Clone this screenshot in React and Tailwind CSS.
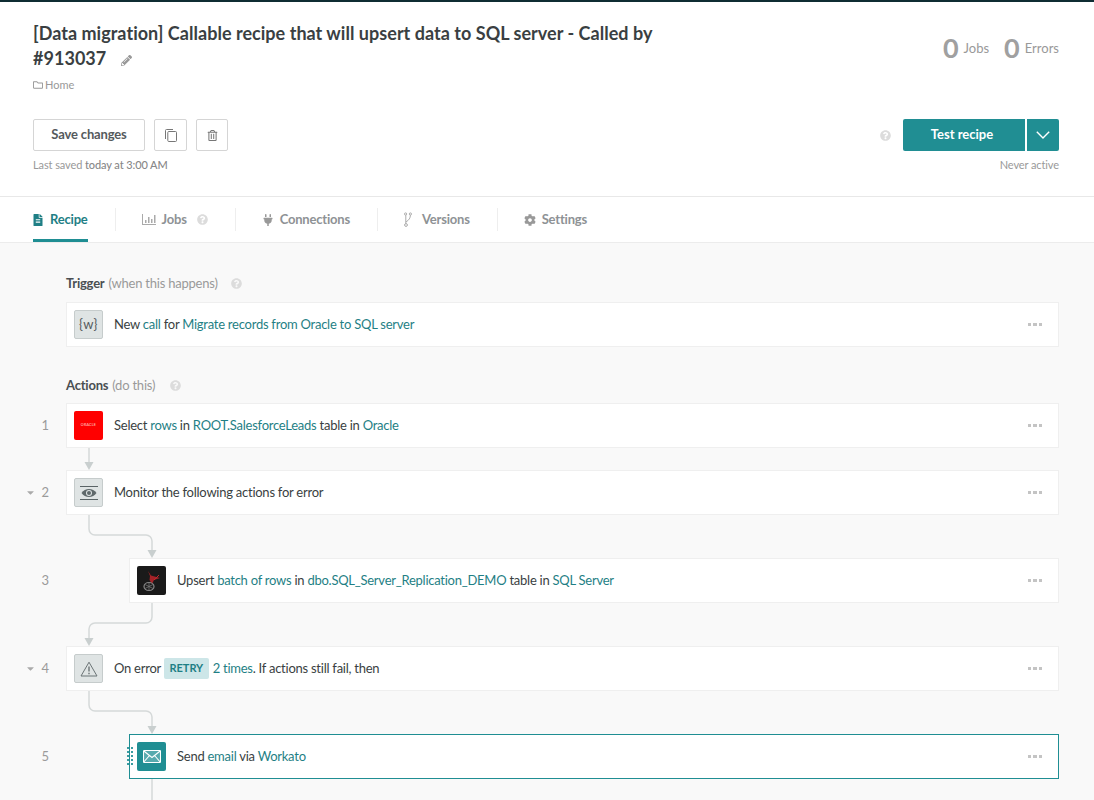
import React from "react";
import { FaFileAlt, FaPlug, FaCog, FaQuestionCircle, FaPencilAlt, FaRegFolder, FaCaretDown, FaRegTrashAlt } from "react-icons/fa";

const Help = ({ className = "" }) => <FaQuestionCircle className={`text-[#dcdcdc] text-[11px] ${className}`} />;

const Link = ({ children }) => <span className="text-[#1f7f85]">{children}</span>;

const Dots = () => (
  <div className="flex gap-[2px] ml-auto mr-[16px]">
    <span className="w-[3.5px] h-[3.5px] bg-[#c4c4c4]" />
    <span className="w-[3.5px] h-[3.5px] bg-[#c4c4c4]" />
    <span className="w-[3.5px] h-[3.5px] bg-[#c4c4c4]" />
  </div>
);

const Tile = ({ children, className = "bg-[#dfe4e4] border border-[#c6cccc]" }) => (
  <div className={`w-[29px] h-[29px] rounded-[2px] shrink-0 flex items-center justify-center mr-[11px] ${className}`}>{children}</div>
);

const Card = ({ icon, children, active }) => (
  <div className={`relative flex-1 h-[45px] bg-white flex items-center pl-[7px] text-[13px] tracking-[-0.25px] text-[#3a3f42] border ${active ? "border-[#1f8e93]" : "border-[#efefef]"}`}>
    {active && (
      <div className="absolute left-[-3px] top-[12px] w-[6px] flex flex-wrap gap-[2px]">
        {Array.from({ length: 10 }).map((_, i) => (
          <span key={i} className="w-[2px] h-[2px] bg-[#3a9ca1]" />
        ))}
      </div>
    )}
    {icon}
    <div className="whitespace-nowrap">{children}</div>
    <Dots />
  </div>
);

const Row = ({ n, caret, indent, icon, active, children }) => (
  <div className="flex items-center">
    <div className="w-[66px] shrink-0 flex items-center justify-end pr-[17px] text-[13px] text-[#9b9b9b] gap-[5px]">
      {caret && <FaCaretDown className="text-[#aaaaaa] text-[11px]" />}
      <span>{n}</span>
    </div>
    <div className={`flex-1 flex ${indent ? "pl-[63px]" : ""}`}>
      <Card icon={icon} active={active}>{children}</Card>
    </div>
  </div>
);

const Arrow = ({ x, y }) => <polygon points={`${x - 4.5},${y - 8} ${x + 4.5},${y - 8} ${x},${y}`} fill="#c9cfcf" />;

const Connector = ({ h, d, ax }) => (
  <svg className="block ml-[66px]" width="120" height={h} fill="none">
    <path d={d} stroke="#d5d9d9" strokeWidth="1.5" />
    <Arrow x={ax} y={h} />
  </svg>
);

const Tab = ({ icon, label, active, extra, last, gap }) => (
  <div className={`flex items-center h-[23px] pl-[26px] pr-[27px] first:pl-0 ${last ? "" : "border-r border-[#eeeeee]"}`}>
    <div className={`relative flex items-center h-[23px] ${gap} ${active ? "text-[#1f7f85]" : "text-[#8e9295]"}`}>
      {icon}
      <span className="font-bold text-[13px] tracking-[-0.2px]">{label}</span>
      {extra}
      {active && <span className="absolute left-0 right-0 top-[31px] h-[3px] bg-[#1f8e93]" />}
    </div>
  </div>
);

export default function App() {
  return (
    <div className="h-[800px] overflow-hidden bg-white" style={{ fontFamily: "Lato, sans-serif" }}>
      <div className="h-[2px] bg-[#0f2d33]" />
      <header className="h-[195px] px-[33px] pr-[35px] pt-[19px] border-b border-[#e8e8e8]">
        <div className="flex justify-between">
          <div className="w-[640px]">
            <h1 className="text-[18px] leading-[25px] tracking-[0.03px] font-bold text-[#3a3f42]">
              [Data migration] Callable recipe that will upsert data to SQL server - Called by
              <br />
              #913037
              <FaPencilAlt className="inline-block ml-[15px] text-[11px] text-[#999999] align-[-1px]" />
            </h1>
            <div className="flex items-center gap-[2px] mt-[6px] text-[11px] text-[#999999] leading-[16px]">
              <FaRegFolder className="text-[10px]" />
              Home
            </div>
          </div>
          <div className="flex items-start gap-[15px] text-[13px] text-[#999999] pt-[11px]">
            <div className="flex items-center gap-[5px]">
              <span className="text-[27px] leading-[32px] font-bold text-[#a0a0a0]">0</span>
              <span className="mt-[1px]">Jobs</span>
            </div>
            <div className="flex items-center gap-[5px]">
              <span className="text-[27px] leading-[32px] font-bold text-[#a0a0a0]">0</span>
              <span className="mt-[1px]">Errors</span>
            </div>
          </div>
        </div>
        <div className="flex justify-between mt-[26px]">
          <div>
            <div className="flex gap-[9px]">
              <button className="w-[112px] h-[32px] border border-[#d5d5d5] rounded-[2px] text-[13px] tracking-[-0.15px] font-bold text-[#555a5d]">Save changes</button>
              <button className="w-[33px] h-[32px] border border-[#d5d5d5] rounded-[2px] flex items-center justify-center">
                <svg width="12" height="13" viewBox="0 0 12 13" fill="none" stroke="#777" strokeWidth="1">
                  <path d="M8 .5H1.5a1 1 0 0 0-1 1V10" />
                  <rect x="2.8" y="2.5" width="8.7" height="10" rx="1" />
                </svg>
              </button>
              <button className="w-[32px] h-[32px] border border-[#d5d5d5] rounded-[2px] flex items-center justify-center">
                <FaRegTrashAlt className="text-[11px] text-[#777777]" />
              </button>
            </div>
            <p className="mt-[7px] text-[11px] leading-[14px] tracking-[-0.1px] text-[#999999]">
              Last saved <span className="text-[#888888] font-medium">today at 3:00 AM</span>
            </p>
          </div>
          <div className="flex flex-col items-end">
            <div className="flex items-center">
              <Help className="mr-[12px]" />
              <button className="w-[122px] h-[32px] bg-[#208e93] rounded-l-[2px] text-white text-[13px] font-bold pr-[4px]">Test recipe</button>
              <button className="w-[32px] h-[32px] ml-[2px] bg-[#208e93] rounded-r-[2px] flex items-center justify-center">
                <svg width="14" height="8" viewBox="0 0 14 8" fill="none" stroke="#fff" strokeWidth="1.4">
                  <path d="M.8.8 7 7l6.2-6.2" />
                </svg>
              </button>
            </div>
            <p className="mt-[7px] text-[11px] leading-[14px] tracking-[-0.1px] text-[#999999]">Never active</p>
          </div>
        </div>
      </header>

      <nav className="h-[46px] px-[33px] flex items-center border-b border-[#ececec]">
        <Tab active gap="gap-[6px]" label="Recipe" icon={<FaFileAlt className="text-[12px] -ml-[1px]" />} />
        <Tab
          gap="gap-[6px]"
          label="Jobs"
          icon={
            <svg width="14" height="11" viewBox="0 0 14 11" fill="#aaa">
              <path d="M0 0h1v10h13v1H0zM3 6h1.5v3H3zM6 3h1.5v6H6zM9 5h1.5v4H9zM12 1h1.5v8H12z" />
            </svg>
          }
          extra={<Help className="ml-[4px]" />}
        />
        <Tab gap="gap-[6px]" label="Connections" icon={<FaPlug className="text-[12px] text-[#999999]" />} />
        <Tab
          gap="gap-[10px]"
          label="Versions"
          icon={
            <svg width="8" height="15" viewBox="0 0 8 15" fill="none" stroke="#aaa" strokeWidth="1">
              <circle cx="2" cy="13" r="1.4" />
              <circle cx="1.6" cy="2" r="1.1" />
              <circle cx="6.4" cy="2" r="1.1" />
              <path d="M1.8 11.5V3.2M2 10C5 8 6.4 6 6.4 3.2" />
            </svg>
          }
        />
        <Tab last gap="gap-[6px]" label="Settings" icon={<FaCog className="text-[12px] text-[#999999]" />} />
      </nav>

      <main className="bg-[#f9f9f9] h-[557px] pr-[35px] pt-[31px] overflow-hidden">
        <div className="ml-[66px] flex items-center text-[13px] leading-[18px] tracking-[-0.22px]">
          <span className="font-bold text-[#4a4f52]">Trigger</span>
          <span className="ml-[4px] text-[#999999]">(when this happens)</span>
          <Help className="ml-[13px]" />
        </div>
        <div className="ml-[66px] mt-[10px] flex">
          <Card
            icon={
              <Tile>
                <span className="text-[13px] tracking-[0.5px] text-[#555a5d]">{"{w}"}</span>
              </Tile>
            }
          >
            New <Link>call</Link> for <Link>Migrate records from Oracle to SQL server</Link>
          </Card>
        </div>

        <div className="ml-[66px] mt-[29px] flex items-center text-[13px] leading-[18px] tracking-[-0.22px]">
          <span className="font-bold text-[#4a4f52]">Actions</span>
          <span className="ml-[4px] text-[#999999]">(do this)</span>
          <Help className="ml-[15px]" />
        </div>
        <div className="mt-[9px]">
          <Row
            n="1"
            icon={
              <Tile className="bg-[#ff0000]">
                <span className="text-[3.5px] tracking-[0.3px] text-white/80">ORACLE</span>
              </Tile>
            }
          >
            Select <Link>rows</Link> in <Link>ROOT.SalesforceLeads</Link> table in <Link>Oracle</Link>
          </Row>
          <Connector h={22} d="M23 0V16" ax={23} />
          <Row
            n="2"
            caret
            icon={
              <Tile>
                <svg width="20" height="16" viewBox="0 0 20 16" fill="none">
                  <path d="M1 1.5h18M1 14.5h18" stroke="#5a6466" strokeWidth="1" />
                  <path d="M2.5 8C6 2.8 14 2.8 17.5 8 14 13.2 6 13.2 2.5 8z" fill="#5f696b" />
                  <circle cx="10" cy="8" r="3" fill="#dfe4e4" />
                  <circle cx="10" cy="8" r="2" fill="#5f696b" />
                </svg>
              </Tile>
            }
          >
            Monitor the following actions for error
          </Row>
          <Connector h={43} d="M23 0V14a6 6 0 0 0 6 6H80a6 6 0 0 1 6 6V36" ax={86} />
          <Row
            n="3"
            indent
            icon={
              <Tile className="bg-[#1a1a1a]">
                <svg width="20" height="22" viewBox="0 0 20 22" fill="none">
                  <path d="M6 1 9 5.5 18 8 12 10 10 14 7.5 10 8 6z" fill="#a32227" />
                  <path d="M12 10 17 5" stroke="#c0282d" strokeWidth="1" />
                  <ellipse cx="7" cy="16.5" rx="5" ry="4" stroke="#8a8a8a" strokeWidth="1.2" />
                  <path d="M3 14.5 11 18.5M3 18.5l8-4M7 12.5v8" stroke="#777" strokeWidth=".8" />
                </svg>
              </Tile>
            }
          >
            Upsert <Link>batch of rows</Link> in <Link>dbo.SQL_Server_Replication_DEMO</Link> table in <Link>SQL Server</Link>
          </Row>
          <Connector h={43} d="M86 0V14a6 6 0 0 1-6 6H29a6 6 0 0 0-6 6V36" ax={23} />
          <Row
            n="4"
            caret
            icon={
              <Tile>
                <svg width="18" height="16" viewBox="0 0 18 16" fill="none" stroke="#6b7476" strokeWidth="1">
                  <path d="M9 1.2 17 15H1z" strokeLinejoin="round" />
                  <path d="M9 5.5v5M9 11.8v1.4" strokeWidth="1.4" />
                </svg>
              </Tile>
            }
          >
            <span className="inline-flex items-center">
              On error
              <span className="ml-[3px] mr-[4px] px-[5.5px] h-[21px] inline-flex items-center bg-[#cde6e8] rounded-[2px] text-[11px] tracking-[-0.05px] font-bold text-[#1f7f85]">RETRY</span>
              <Link>2 times</Link>. If actions still fail, then
            </span>
          </Row>
          <Connector h={43} d="M23 0V14a6 6 0 0 0 6 6H80a6 6 0 0 1 6 6V36" ax={86} />
          <Row
            n="5"
            indent
            active
            icon={
              <Tile className="bg-[#208e93]">
                <svg width="18" height="13" viewBox="0 0 18 13" fill="none" stroke="#fff" strokeWidth="1.1">
                  <rect x=".5" y=".5" width="17" height="12" rx="1" fill="#ffffff" fillOpacity=".25" />
                  <path d="M.8 1 9 7.5 17.2 1M.8 12 6.5 5.5M17.2 12 11.5 5.5" />
                </svg>
              </Tile>
            }
          >
            Send <Link>email</Link> via <Link>Workato</Link>
          </Row>
          <svg className="block ml-[66px]" width="120" height="30" fill="none">
            <path d="M86 0V30" stroke="#d5d9d9" strokeWidth="1.5" />
          </svg>
        </div>
      </main>
    </div>
  );
}
